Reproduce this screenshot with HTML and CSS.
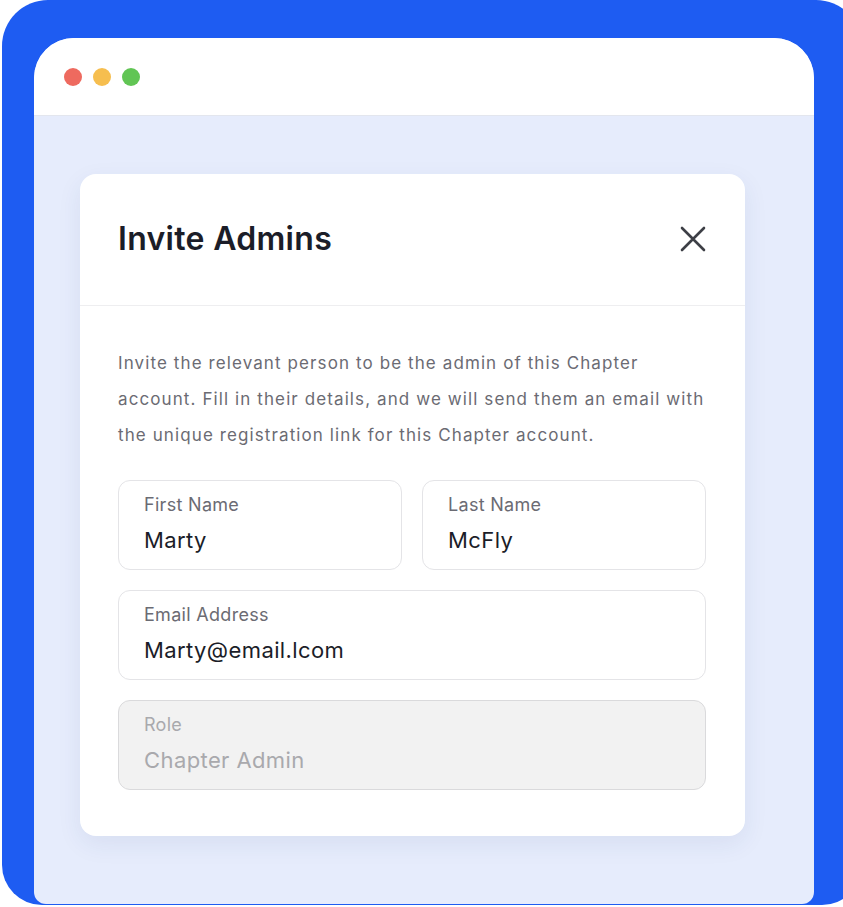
FILE: index.html
```html
<!DOCTYPE html>
<html>
<head>
<meta charset="utf-8">
<link rel="stylesheet" href="styles.css">
</head>
<body>
<div class="frame">
  <div class="window">
    <div class="titlebar">
      <span class="dot red"></span>
      <span class="dot yellow"></span>
      <span class="dot green"></span>
    </div>
    <div class="content">
      <div class="card">
        <div class="card-head">
          <h1 class="title">Invite Admins</h1>
          <svg class="close" width="28" height="28" viewBox="0 0 28 28" fill="none">
            <path d="M3 3 L25 25 M25 3 L3 25" stroke="#3d3f46" stroke-width="2.6" stroke-linecap="round"/>
          </svg>
        </div>
        <div class="card-body">
          <p class="desc">Invite the relevant person to be the admin of this Chapter<br>account. Fill in their details, and we will send them an email with<br>the unique registration link for this Chapter account.</p>
          <div class="row">
            <div class="field">
              <div class="label">First Name</div>
              <div class="value">Marty</div>
            </div>
            <div class="field">
              <div class="label">Last Name</div>
              <div class="value">McFly</div>
            </div>
          </div>
          <div class="field">
            <div class="label">Email Address</div>
            <div class="value">Marty@email.lcom</div>
          </div>
          <div class="field disabled">
            <div class="label">Role</div>
            <div class="value">Chapter Admin</div>
          </div>
        </div>
      </div>
    </div>
  </div>
</div>
</body>
</html>
```

FILE: styles.css
```css
html, body {
  margin: 0;
  padding: 0;
  background: #ffffff;
  font-family: Inter, "Noto Sans", sans-serif;
}
.frame {
  margin-left: 2px;
  width: 860px;
  height: 905px;
  background: #1e5cf2;
  border-radius: 46px 46px 40px 40px;
  padding-top: 38px;
  padding-left: 32px;
  box-sizing: border-box;
  overflow: hidden;
}
.window {
  width: 780px;
  height: 866px;
  background: #e6ecfc;
  border-radius: 40px 40px 12px 12px;
  overflow: hidden;
  display: flex;
  flex-direction: column;
}
.titlebar {
  height: 78px;
  background: #ffffff;
  border-bottom: 1px solid #e3e6ee;
  display: flex;
  align-items: center;
  gap: 11px;
  padding-left: 30px;
  box-sizing: border-box;
  flex-shrink: 0;
}
.dot {
  width: 18px;
  height: 18px;
  border-radius: 50%;
  display: block;
}
.red { background: #ee6a5f; }
.yellow { background: #f6be4f; }
.green { background: #61c554; }
.content {
  padding-top: 58px;
  padding-left: 46px;
}
.card {
  width: 665px;
  background: #ffffff;
  border-radius: 16px;
  box-shadow: 0 8px 24px rgba(40, 60, 120, 0.08);
}
.card-head {
  height: 132px;
  border-bottom: 1px solid #eeeef0;
  display: flex;
  align-items: center;
  justify-content: space-between;
  padding: 0 38px;
  box-sizing: border-box;
}
.title {
  margin: 0;
  margin-top: -2px;
  font-size: 32px;
  font-weight: 600;
  color: #1b1d28;
  letter-spacing: 0.3px;
}
.close {
  display: block;
  margin-right: 0;
  margin-top: -2px;
}
.card-body {
  padding: 39px 39px 46px 38px;
  display: flex;
  flex-direction: column;
  gap: 20px;
}
.desc {
  margin: 0 0 7px 0;
  font-size: 17px;
  line-height: 36px;
  color: #6b6b73;
  letter-spacing: 1.1px;
  white-space: nowrap;
}
.row {
  display: flex;
  gap: 20px;
}
.row .field {
  flex: 1;
}
.field {
  height: 90px;
  box-sizing: border-box;
  border: 1.5px solid #e4e4e7;
  border-radius: 12px;
  padding: 12px 24px 0 25px;
  background: #ffffff;
}
.label {
  font-size: 18px;
  line-height: 24px;
  color: #6b6b73;
  letter-spacing: 0.3px;
}
.value {
  margin-top: 10px;
  font-size: 22px;
  line-height: 26px;
  color: #1b1d28;
  letter-spacing: 0.4px;
}
.field.disabled {
  background: #f2f2f2;
  border-color: #dadadc;
}
.field.disabled .label,
.field.disabled .value {
  color: #a9a9ad;
}
```
